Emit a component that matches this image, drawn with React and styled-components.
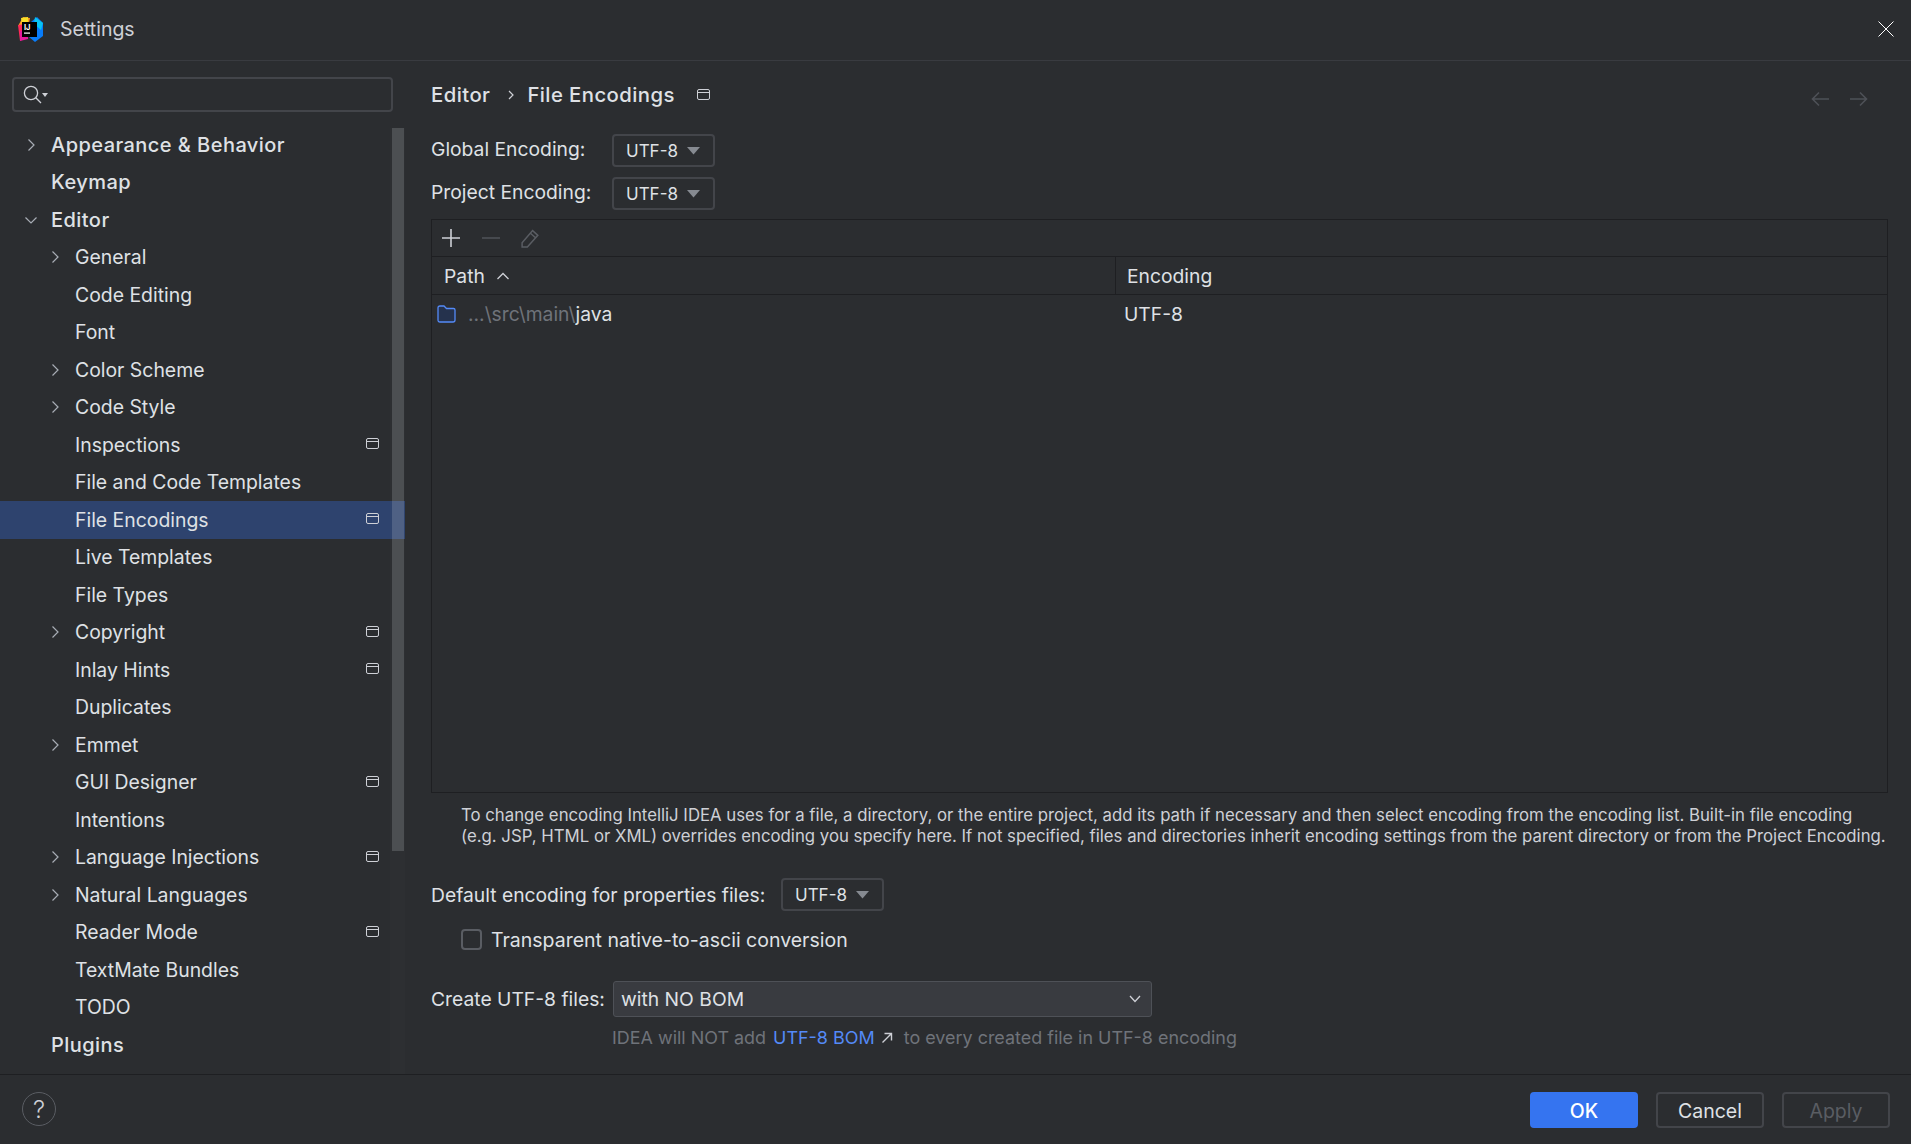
import React from "react";
import styled, { createGlobalStyle } from "styled-components";

const GlobalStyle = createGlobalStyle`
  html, body {
    margin: 0;
    padding: 0;
    background: #2b2d30;
    overflow: hidden;
  }
  * {
    box-sizing: border-box;
  }
`;

const treeItems = [
  { label: "Appearance & Behavior", level: 0, arrow: "right" },
  { label: "Keymap", level: 0 },
  { label: "Editor", level: 0, arrow: "down" },
  { label: "General", level: 1, arrow: "right" },
  { label: "Code Editing", level: 1 },
  { label: "Font", level: 1 },
  { label: "Color Scheme", level: 1, arrow: "right" },
  { label: "Code Style", level: 1, arrow: "right" },
  { label: "Inspections", level: 1, pin: true },
  { label: "File and Code Templates", level: 1 },
  { label: "File Encodings", level: 1, pin: true, selected: true },
  { label: "Live Templates", level: 1 },
  { label: "File Types", level: 1 },
  { label: "Copyright", level: 1, arrow: "right", pin: true },
  { label: "Inlay Hints", level: 1, pin: true },
  { label: "Duplicates", level: 1 },
  { label: "Emmet", level: 1, arrow: "right" },
  { label: "GUI Designer", level: 1, pin: true },
  { label: "Intentions", level: 1 },
  { label: "Language Injections", level: 1, arrow: "right", pin: true },
  { label: "Natural Languages", level: 1, arrow: "right" },
  { label: "Reader Mode", level: 1, pin: true },
  { label: "TextMate Bundles", level: 1 },
  { label: "TODO", level: 1 },
  { label: "Plugins", level: 0 },
];

function Logo() {
  return (
    <svg width="25" height="25" viewBox="0 0 25 25">
      <path d="M0 9 L5 0 L12 1 L10 12 Z" fill="#ff9a1f" />
      <path d="M3 1 L10 0 L10 7 L4 8 Z" fill="#f7e02a" />
      <path d="M0 8 L9 7 L10 20 L2 24 Z" fill="#fe2857" />
      <path d="M2 14 L10 12 L10 22 L2 24 Z" fill="#e5199b" />
      <path d="M13 5 L19 0 L25 6 L25 19 L17 25 L11 20 Z" fill="#087cfa" />
      <path d="M17 0 L25 6 L23 13 L16 7 Z" fill="#07c3f2" />
      <rect x="4" y="5" width="15" height="15" fill="#000" />
      <text x="6" y="12.5" fontSize="7.5" fontWeight="700" fill="#fff" fontFamily="Inter, sans-serif">IJ</text>
      <rect x="6" y="15.5" width="6" height="1.2" fill="#fff" />
    </svg>
  );
}

function PinIcon() {
  return (
    <svg width="13" height="13" viewBox="0 0 13 13" fill="none" stroke="#ced0d6" strokeWidth="1">
      <rect x="0.5" y="1.5" width="12" height="10" rx="1.5" />
      <path d="M0.5 4.5 H12.5" />
    </svg>
  );
}

function Chevron({ dir }) {
  return (
    <svg width="16" height="16" viewBox="0 0 16 16" fill="none" stroke="#a8adb5" strokeWidth="1.2">
      {dir === "right" ? <path d="M5.5 2.5 L11 8 L5.5 13.5" /> : <path d="M2.5 5.5 L8 11 L13.5 5.5" />}
    </svg>
  );
}

function Caret() {
  return (
    <svg width="13" height="8" viewBox="0 0 13 8">
      <path d="M0 0 H13 L6.5 7.5 Z" fill="#868a91" />
    </svg>
  );
}

const Page = styled.div`
  width: 100vw;
  height: 100vh;
  display: flex;
  flex-direction: column;
  background: #2b2d30;
  color: #dfe1e5;
  font-family: Inter, "Liberation Sans", sans-serif;
  font-size: 19.3px;
`;

const TitleBar = styled.header`
  height: 61px;
  flex: none;
  display: flex;
  align-items: center;
  padding: 0 17px 2px 18px;
  border-bottom: 1px solid #393b40;
`;

const TitleText = styled.span`
  margin-left: 17px;
  font-size: 19.5px;
  color: #ced0d6;
`;

const CloseButton = styled.button`
  margin-left: auto;
  width: 16px;
  height: 16px;
  padding: 0;
  display: flex;
  border: 0;
  background: none;
`;

const Body = styled.div`
  flex: 1;
  min-height: 0;
  display: flex;
`;

const Sidebar = styled.aside`
  position: relative;
  width: 405px;
  flex: none;
  overflow: hidden;
`;

const SearchBox = styled.div`
  width: 381px;
  height: 35px;
  margin: 16px 0 14px 12px;
  padding-left: 9px;
  display: flex;
  align-items: center;
  border: 2px solid #43454a;
  border-radius: 4px;
`;

const SearchCaret = styled.span`
  width: 0;
  height: 0;
  border: 3px solid transparent;
  border-top: 4px solid #ced0d6;
  border-bottom: 0;
`;

const Tree = styled.ul`
  list-style: none;
  margin: 0;
  padding: 0;
`;

const TreeRow = styled.li`
  height: 37.5px;
  padding-left: ${(p) => 23 + p.$level * 24}px;
  padding-right: 26px;
  display: flex;
  align-items: center;
  background: ${(p) => (p.$selected ? "#2e436e" : "transparent")};
  font-weight: ${(p) => (p.$level === 0 ? 500 : 400)};
  font-size: ${(p) => (p.$level === 0 ? "20px" : "19.4px")};
  letter-spacing: ${(p) => (p.$level === 0 ? "0.45px" : "0")};
`;

const ArrowSlot = styled.span`
  width: 28px;
  flex: none;
  display: flex;
  align-items: center;
`;

const RowPin = styled.span`
  margin-left: auto;
  display: flex;
  margin-top: -2px;
`;

const ScrollTrack = styled.div`
  position: absolute;
  top: 67px;
  right: 0;
  bottom: 0;
  width: 15px;
  padding-left: 2px;
  background: rgba(255, 255, 255, 0.012);
`;

const ScrollThumb = styled.div`
  width: 12px;
  height: 723px;
  background: rgba(223, 225, 229, 0.18);
`;

const Panel = styled.main`
  flex: 1;
  min-width: 0;
  padding: 18px 23px 0 26px;
  display: flex;
  flex-direction: column;
`;

const Breadcrumbs = styled.div`
  height: 32px;
  padding-bottom: 1px;
  display: flex;
  align-items: center;
  font-size: 20.3px;
  font-weight: 500;
  letter-spacing: 0.45px;
`;

const CrumbSep = styled.span`
  display: flex;
  margin: 0 12px 0 17px;
`;

const CrumbPin = styled.span`
  display: flex;
  margin-left: 22px;
`;

const NavArrows = styled.div`
  margin-left: auto;
  margin-right: 20px;
  margin-top: 8px;
  display: flex;
  gap: 21px;
`;

const FieldRow = styled.div`
  display: flex;
  align-items: center;
  margin-top: ${(p) => p.$top}px;
  height: 33px;
`;

const FieldLabel = styled.label`
  width: ${(p) => p.$width}px;
  flex: none;
  padding-bottom: ${(p) => (p.$lift ? 3 : 0)}px;
`;

const Combo = styled.div`
  width: 103px;
  height: 33px;
  padding: 0 13px 0 12px;
  display: flex;
  align-items: center;
  justify-content: space-between;
  border: 2px solid #43454a;
  border-radius: 4px;
  font-size: 17px;
`;

const TableBox = styled.section`
  margin-top: 9px;
  height: 574px;
  flex: none;
  display: flex;
  flex-direction: column;
  border: 1px solid #1e1f22;
`;

const Toolbar = styled.div`
  height: 37px;
  flex: none;
  padding-left: 9px;
  display: flex;
  align-items: center;
  gap: 20px;
  border-bottom: 1px solid #1e1f22;
`;

const TableHead = styled.div`
  height: 38px;
  flex: none;
  display: grid;
  grid-template-columns: 683px 1fr;
  border-bottom: 1px solid #1e1f22;
`;

const HeadCell = styled.div`
  display: flex;
  align-items: center;
  gap: 11px;
  padding-left: 12px;
  & + & {
    border-left: 1px solid #1e1f22;
    padding-left: 11px;
  }
`;

const TableRow = styled.div`
  height: 37px;
  display: grid;
  grid-template-columns: 692px 1fr;
  align-items: center;
`;

const PathCell = styled.div`
  padding-left: 5px;
  display: flex;
  align-items: center;
  gap: 12px;
`;

const PathDim = styled.span`
  color: #6f737a;
`;

const Hint = styled.p`
  margin: 12px 0 0;
  padding-left: 30px;
  font-size: 16.77px;
  line-height: 21px;
  white-space: nowrap;
  color: #ced0d6;
`;

const CheckRow = styled.div`
  margin: 18px 0 0 30px;
  height: 21px;
  display: flex;
  align-items: center;
  gap: 9px;
  font-size: 19.5px;
`;

const CheckBox = styled.span`
  width: 21px;
  height: 21px;
  flex: none;
  border: 2px solid #5a5d63;
  border-radius: 4px;
`;

const SelectBox = styled.div`
  width: 539px;
  height: 36px;
  padding: 1px 9px 0 7px;
  display: flex;
  align-items: center;
  justify-content: space-between;
  background: #393b40;
  border: 1px solid #4e5157;
  border-radius: 3px;
`;

const NoteRow = styled.div`
  margin: 12px 0 0 181px;
  height: 21px;
  display: flex;
  align-items: center;
  color: #6f737a;
  font-size: 17.95px;
`;

const NoteLink = styled.a`
  margin: 0 6px 0 7px;
  color: #548af7;
  display: inline-flex;
  align-items: center;
  gap: 6px;
`;

const Footer = styled.footer`
  height: 70px;
  flex: none;
  padding: 17px 21px 0 22px;
  display: flex;
  gap: 18px;
  border-top: 1px solid #1e1f22;
`;

const HelpButton = styled.button`
  width: 34px;
  height: 34px;
  margin-right: auto;
  padding: 1px 0 0;
  border: 1px solid #5a5d63;
  border-radius: 50%;
  background: none;
  color: #ced0d6;
  font-family: inherit;
  font-size: 24px;
  font-weight: 300;
`;

const ActionButton = styled.button`
  width: 108px;
  height: 36px;
  padding: 1px 0 0;
  border: 2px solid ${(p) => (p.$primary ? "#3574f0" : "#43454a")};
  border-radius: 4px;
  background: ${(p) => (p.$primary ? "#3574f0" : "transparent")};
  color: ${(p) => (p.$primary ? "#fff" : p.disabled ? "#5a5d63" : "#dfe1e5")};
  font-family: inherit;
  font-size: 19.5px;
  font-weight: ${(p) => (p.$primary ? 500 : 400)};
`;

export default function App() {
  return (
    <Page>
      <GlobalStyle />
      <TitleBar>
        <Logo />
        <TitleText>Settings</TitleText>
        <CloseButton aria-label="Close">
          <svg width="16" height="16" viewBox="0 0 16 16" stroke="#fff" strokeWidth="1">
            <path d="M0.5 0.5 L15.5 15.5 M15.5 0.5 L0.5 15.5" />
          </svg>
        </CloseButton>
      </TitleBar>
      <Body>
        <Sidebar>
          <SearchBox>
            <svg width="19" height="19" viewBox="0 0 19 19" fill="none" stroke="#ced0d6" strokeWidth="1.3">
              <circle cx="8" cy="8" r="6.6" />
              <path d="M12.8 12.8 L18 18" />
            </svg>
            <SearchCaret />
          </SearchBox>
          <Tree>
            {treeItems.map((item) => (
              <TreeRow key={item.label} $level={item.level} $selected={item.selected}>
                <ArrowSlot>{item.arrow && <Chevron dir={item.arrow} />}</ArrowSlot>
                {item.label}
                {item.pin && (
                  <RowPin>
                    <PinIcon />
                  </RowPin>
                )}
              </TreeRow>
            ))}
          </Tree>
          <ScrollTrack>
            <ScrollThumb />
          </ScrollTrack>
        </Sidebar>
        <Panel>
          <Breadcrumbs>
            Editor
            <CrumbSep>
              <svg width="8" height="12" viewBox="0 0 8 12" fill="none" stroke="#ced0d6" strokeWidth="1.2">
                <path d="M2 2 L6 6 L2 10" />
              </svg>
            </CrumbSep>
            File Encodings
            <CrumbPin>
              <PinIcon />
            </CrumbPin>
            <NavArrows>
              <svg width="18" height="16" viewBox="0 0 18 16" fill="none" stroke="#4e5157" strokeWidth="1.6">
                <path d="M18 8 H1.5 M8 1.5 L1.5 8 L8 14.5" />
              </svg>
              <svg width="18" height="16" viewBox="0 0 18 16" fill="none" stroke="#4e5157" strokeWidth="1.6">
                <path d="M0 8 H16.5 M10 1.5 L16.5 8 L10 14.5" />
              </svg>
            </NavArrows>
          </Breadcrumbs>
          <FieldRow $top={23}>
            <FieldLabel $width={181} $lift>Global Encoding:</FieldLabel>
            <Combo>UTF-8 <Caret /></Combo>
          </FieldRow>
          <FieldRow $top={10}>
            <FieldLabel $width={181} $lift>Project Encoding:</FieldLabel>
            <Combo>UTF-8 <Caret /></Combo>
          </FieldRow>
          <TableBox>
            <Toolbar>
              <svg width="20" height="20" viewBox="0 0 20 20" stroke="#ced0d6" strokeWidth="1.6">
                <path d="M10 1 V19 M1 10 H19" />
              </svg>
              <svg width="20" height="20" viewBox="0 0 20 20" stroke="#4e5157" strokeWidth="1.6">
                <path d="M1 10 H19" />
              </svg>
              <svg width="19" height="21" viewBox="0 0 18 20" fill="none" stroke="#5a5d63" strokeWidth="1.4">
                <path d="M1 14 L11 2.5 L16 7 L6 18 H1 Z M9 5 L14 9.5" />
              </svg>
            </Toolbar>
            <TableHead>
              <HeadCell>
                Path
                <svg width="14" height="10" viewBox="0 0 14 10" fill="none" stroke="#ced0d6" strokeWidth="1.3">
                  <path d="M1.5 8 L7 2.5 L12.5 8" />
                </svg>
              </HeadCell>
              <HeadCell>Encoding</HeadCell>
            </TableHead>
            <TableRow>
              <PathCell>
                <svg width="19" height="18" viewBox="0 0 19 18" fill="#25324d" stroke="#548af7" strokeWidth="1.3">
                  <path d="M1 3 Q1 1 3 1 H7 L9.5 3.5 H16.5 Q18 3.5 18 5 V15 Q18 17 16 17 H3 Q1 17 1 15 Z" />
                </svg>
                <span>
                  <PathDim>...\src\main\</PathDim>java
                </span>
              </PathCell>
              <span>UTF-8</span>
            </TableRow>
          </TableBox>
          <Hint>
            To change encoding IntelliJ IDEA uses for a file, a directory, or the entire project, add its path if necessary and then select encoding from the encoding list. Built-in file encoding
            <br />
            (e.g. JSP, HTML or XML) overrides encoding you specify here. If not specified, files and directories inherit encoding settings from the parent directory or from the Project Encoding.
          </Hint>
          <FieldRow $top={31}>
            <FieldLabel $width={350}>Default encoding for properties files:</FieldLabel>
            <Combo>UTF-8 <Caret /></Combo>
          </FieldRow>
          <CheckRow>
            <CheckBox />
            Transparent native-to-ascii conversion
          </CheckRow>
          <FieldRow $top={32}>
            <FieldLabel $width={182}>Create UTF-8 files:</FieldLabel>
            <SelectBox>
              with NO BOM
              <svg width="14" height="10" viewBox="0 0 14 10" fill="none" stroke="#ced0d6" strokeWidth="1.3">
                <path d="M2 2 L7 7.5 L12 2" />
              </svg>
            </SelectBox>
          </FieldRow>
          <NoteRow>
            IDEA will NOT add
            <NoteLink>
              UTF-8 BOM
              <svg width="12" height="12" viewBox="0 0 12 12" fill="none" stroke="#ced0d6" strokeWidth="1.4">
                <path d="M1.5 10.5 L10.5 1.5 M3.5 1.5 H10.5 V8.5" />
              </svg>
            </NoteLink>
            &nbsp;to every created file in UTF-8 encoding
          </NoteRow>
        </Panel>
      </Body>
      <Footer>
        <HelpButton aria-label="Help">?</HelpButton>
        <ActionButton $primary>OK</ActionButton>
        <ActionButton>Cancel</ActionButton>
        <ActionButton disabled>Apply</ActionButton>
      </Footer>
    </Page>
  );
}
